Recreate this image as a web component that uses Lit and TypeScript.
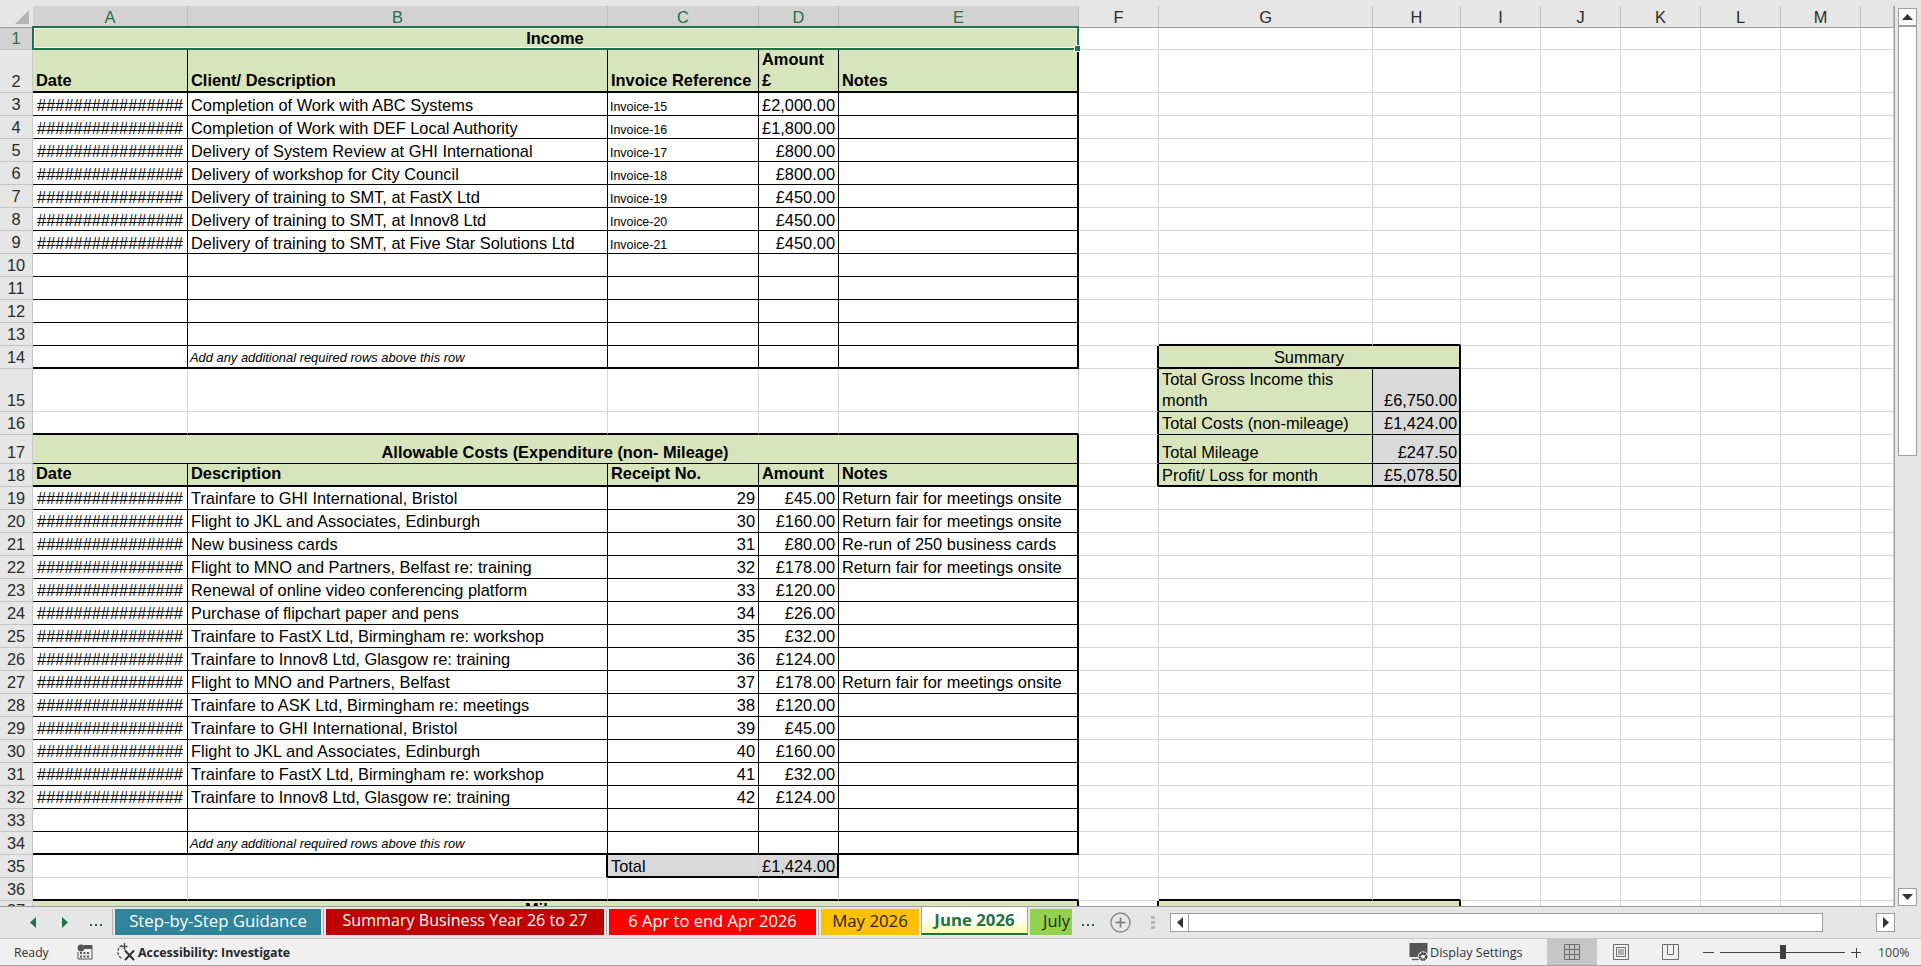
import { LitElement, html, css } from "lit";
import { customElement } from "lit/decorators.js";

const COLS = "ABCDEFGHIJKLMN".split("");
const HASH = "################";
const ROW_H: Record<number, number> = { 1: 22, 2: 43, 15: 43, 17: 29 };

type Cell = { t?: string; c?: string };
const DATA: Record<string, Cell> = {
  A1: { t: "Income", c: "b ctr up" },
  A2: { t: "Date", c: "b wrap" },
  B2: { t: "Client/ Description", c: "b wrap" },
  C2: { t: "Invoice Reference", c: "b wrap" },
  D2: { t: "Amount £", c: "b wrap" },
  E2: { t: "Notes", c: "b wrap" },
  B14: { t: "Add any additional required rows above this row", c: "it" },
  G14: { t: "Summary", c: "ctr" },
  G15: { t: "Total Gross Income this month", c: "wrap" },
  H15: { t: "£6,750.00", c: "rt" },
  G16: { t: "Total Costs (non-mileage)" },
  H16: { t: "£1,424.00", c: "rt" },
  G17: { t: "Total Mileage" },
  H17: { t: "£247.50", c: "rt" },
  G18: { t: "Profit/ Loss for month" },
  H18: { t: "£5,078.50", c: "rt" },
  A17: { t: "Allowable Costs (Expenditure (non- Mileage)", c: "b ctr" },
  A18: { t: "Date", c: "b wrap" },
  B18: { t: "Description", c: "b wrap" },
  C18: { t: "Receipt No.", c: "b wrap" },
  D18: { t: "Amount", c: "b wrap" },
  E18: { t: "Notes", c: "b wrap" },
  B34: { t: "Add any additional required rows above this row", c: "it" },
  C35: { t: "Total" },
  D35: { t: "£1,424.00", c: "rt" },
  A37: { t: "Mileage", c: "b ctr top" },
};

const INCOME: [string, string, string][] = [
  ["Completion of Work with ABC Systems", "Invoice-15", "£2,000.00"],
  ["Completion of Work with DEF Local Authority", "Invoice-16", "£1,800.00"],
  ["Delivery of System Review at GHI International", "Invoice-17", "£800.00"],
  ["Delivery of workshop for City Council", "Invoice-18", "£800.00"],
  ["Delivery of training to SMT, at FastX Ltd", "Invoice-19", "£450.00"],
  ["Delivery of training to SMT, at Innov8 Ltd", "Invoice-20", "£450.00"],
  ["Delivery of training to SMT, at Five Star Solutions Ltd", "Invoice-21", "£450.00"],
];
INCOME.forEach(([d, inv, amt], i) => {
  const r = i + 3;
  DATA["A" + r] = { t: HASH, c: "ctr" };
  DATA["B" + r] = { t: d };
  DATA["C" + r] = { t: inv, c: "sm" };
  DATA["D" + r] = { t: amt, c: "rt" };
});

const FAIR = "Return fair for meetings onsite";
const COSTS: [string, string, string][] = [
  ["Trainfare to GHI International, Bristol", "£45.00", FAIR],
  ["Flight to JKL and Associates, Edinburgh", "£160.00", FAIR],
  ["New business cards", "£80.00", "Re-run of 250 business cards"],
  ["Flight to MNO and Partners, Belfast re: training", "£178.00", FAIR],
  ["Renewal of online video conferencing platform", "£120.00", ""],
  ["Purchase of flipchart paper and pens", "£26.00", ""],
  ["Trainfare to FastX Ltd, Birmingham re: workshop", "£32.00", ""],
  ["Trainfare to Innov8 Ltd, Glasgow re: training", "£124.00", ""],
  ["Flight to MNO and Partners, Belfast", "£178.00", FAIR],
  ["Trainfare to ASK Ltd, Birmingham re: meetings", "£120.00", ""],
  ["Trainfare to GHI International, Bristol", "£45.00", ""],
  ["Flight to JKL and Associates, Edinburgh", "£160.00", ""],
  ["Trainfare to FastX Ltd, Birmingham re: workshop", "£32.00", ""],
  ["Trainfare to Innov8 Ltd, Glasgow re: training", "£124.00", ""],
];
COSTS.forEach(([d, amt, note], i) => {
  const r = i + 19;
  DATA["A" + r] = { t: HASH, c: "ctr" };
  DATA["B" + r] = { t: d };
  DATA["C" + r] = { t: String(29 + i), c: "rt" };
  DATA["D" + r] = { t: amt, c: "rt" };
  DATA["E" + r] = { t: note };
});

const SPANS: Record<string, number> = { A1: 5, A17: 5, A37: 5, G14: 2, G37: 2 };

const within = (r: number, a: number, b: number) => r >= a && r <= b;

function borderClasses(col: string, r: number): string {
  const out: string[] = [];
  const main = "ABCDE".includes(col);
  const side = col === "G" || col === "H";
  if (main) {
    if ([2, 14, 16, 18, 34, 36].includes(r)) out.push("bbt");
    else if (within(r, 3, 13) || within(r, 19, 33) || r === 1 || r === 17) out.push("bb");
  }
  if ((col === "C" || col === "D") && r === 35) out.push("bbt");
  if (side) {
    if ([13, 14, 18, 36].includes(r)) out.push("bbt");
    else if (within(r, 15, 17)) out.push("bb");
  }
  if (col === "E" && (within(r, 1, 14) || within(r, 17, 34) || r === 37)) out.push("brt");
  if ("ABCD".includes(col) && (within(r, 2, 14) || within(r, 18, 34))) out.push("br");
  if ((col === "B" || col === "D") && r === 35) out.push("brt");
  if (col === "F" && (within(r, 14, 18) || r === 37)) out.push("brt");
  if (col === "G" && within(r, 15, 18)) out.push("br");
  if (col === "H" && (within(r, 14, 18) || r === 37)) out.push("brt");
  return out.join(" ");
}

function fillClass(col: string, r: number): string {
  if ("ABCDE".includes(col) && [1, 2, 17, 18, 37].includes(r)) return "green";
  if (col === "G" && (within(r, 14, 18) || r === 37)) return "green";
  if (col === "H" && within(r, 15, 18)) return "gray";
  if ((col === "C" || col === "D") && r === 35) return "gray";
  return "";
}

const TABS = [
  { label: "Step-by-Step Guidance", c: "t1" },
  { label: "Summary Business Year 26 to 27", c: "t2" },
  { label: "6 Apr to end Apr 2026", c: "t3" },
  { label: "May 2026", c: "t4" },
  { label: "June 2026", c: "t5" },
  { label: "July", c: "t6" },
];

@customElement("app-root")
export class AppRoot extends LitElement {
  static styles = css`
    :host {
      display: flex;
      flex-direction: column;
      width: 1921px;
      height: 966px;
      overflow: hidden;
      background: #e6e6e6;
      font-family: "Liberation Sans", Arial, sans-serif;
      color: #000;
    }
    .topstrip { height: 6px; flex: none; background: #e6e6e6; }
    .main { display: flex; height: 900px; flex: none; position: relative; z-index: 1; }
    .sheet-wrap {
      width: 1895px;
      height: 901px;
      flex: none;
      overflow: hidden;
      position: relative;
      border-right: 1px solid #9e9e9e;
      border-bottom: 1px solid #9e9e9e;
      box-sizing: border-box;
      background: #fff;
    }
    .sheet {
      display: grid;
      grid-template-columns: 33px 155px 420px 151px 80px 240px 80px 214px 88px 80px 80px 80px 80px 80px 33px;
      font-size: 16.4px;
      line-height: 18px;
    }
    .corner {
      background: #e6e6e6;
      border-bottom: 1px solid #9e9e9e;
      position: relative;
      box-sizing: border-box;
      height: 22px;
    }
    .corner svg { position: absolute; left: 15px; top: 3px; }
    .ch {
      height: 22px;
      box-sizing: border-box;
      background: #e6e6e6;
      border-bottom: 1px solid #9e9e9e;
      border-right: 1px solid #bdbdbd;
      color: #2b2b2b;
      text-align: center;
      line-height: 20px;
      padding-top: 1px;
    }
    .ch.sel { background: #d2d2d2; color: #217346; border-bottom-color: #217346; }
    .rh {
      box-sizing: border-box;
      background: #e6e6e6;
      border-bottom: 1px solid #c4c4c4;
      border-right: 1px solid #c8c8c8;
      color: #2b2b2b;
      display: flex;
      align-items: flex-end;
      justify-content: center;
      padding-bottom: 2px;
      overflow: hidden;
    }
    .rh.sel { background: #d2d2d2; color: #217346; }
    .rh.clip { align-items: flex-start; padding-bottom: 0; }
    .cell {
      box-sizing: border-box;
      min-width: 0;
      overflow: hidden;
      white-space: nowrap;
      display: flex;
      align-items: flex-end;
      justify-content: flex-start;
      padding: 0 3px 1px;
      border-right: 1px solid #d4d4d4;
      border-bottom: 1px solid #d4d4d4;
    }
    .bb { border-bottom: 1px solid #000; }
    .bbt { border-bottom: 2px solid #000; padding-bottom: 0; }
    .br { border-right: 1px solid #000; }
    .brt { border-right: 2px solid #000; }
    .brt.rt { padding-right: 2px; }
    .green { background: #d8e4bc; }
    .gray { background: #d9d9d9; }
    .b { font-weight: 700; }
    .ctr { justify-content: center; }
    .rt { justify-content: flex-end; }
    .up { padding-bottom: 2px; }
    .up.bbt { padding-bottom: 1px; }
    .sm { font-size: 12.4px; line-height: 16px; padding-bottom: 0; padding-left: 2px; }
    .it { font-style: italic; font-size: 12.9px; line-height: 16px; padding-left: 2px; padding-bottom: 2px; }
    .wrap { line-height: 21px; white-space: normal; padding-bottom: 0; }
    .top { align-items: flex-start; line-height: 18px; }
    .top > span { margin-top: -1px; }
    .selection {
      position: absolute;
      left: 32px;
      top: 20px;
      width: 1047px;
      height: 24px;
      box-sizing: border-box;
      border: 2px solid #217346;
      box-shadow: inset 0 0 0 1px #f4f8ea;
      pointer-events: none;
    }
    .handle {
      position: absolute;
      right: -4px;
      bottom: -4px;
      width: 5px;
      height: 5px;
      background: #217346;
      border: 1px solid #fff;
    }

    .vscroll {
      flex: none;
      width: 26px;
      display: flex;
      flex-direction: column;
      padding: 2px 4px 0 3px;
      box-sizing: border-box;
    }
    .sbtn {
      flex: none;
      background: #fff;
      border: 1px solid #9e9e9e;
      box-sizing: border-box;
      display: flex;
      align-items: center;
      justify-content: center;
    }
    .vscroll .sbtn { height: 18px; width: 19px; }
    .vthumb {
      flex: none;
      height: 430px;
      width: 19px;
      background: #fff;
      border: 1px solid #9e9e9e;
      box-sizing: border-box;
    }
    .vspace { flex: 1; }

    .tabbar {
      height: 32px;
      flex: none;
      display: flex;
      align-items: flex-start;
      background: #e6e6e6;
      box-sizing: border-box;
      position: relative;
    }
    .nav {
      width: 112px;
      flex: none;
      height: 26px;
      margin-top: 3px;
      border-right: 1px solid #b0b0b0;
      display: flex;
      align-items: center;
    }
    .nav .a { margin-left: 30px; display: block; }
    .nav .b2 { margin-left: 26px; display: block; }
    .nav .dots { margin-left: 22px; display: flex; gap: 3px; margin-top: 6px; }
    .dots i { width: 2px; height: 2px; background: #217346; display: block; }
    .tabs { display: flex; margin-left: 2px; align-items: flex-start; }
    .tab {
      flex: none;
      height: 26px;
      margin-top: 3px;
      box-sizing: border-box;
      display: flex;
      align-items: center;
      justify-content: center;
      font-family: "Open Sans", "Noto Sans", sans-serif;
      font-size: 16.5px;
      white-space: nowrap;
      overflow: hidden;
      color: #fff;
      padding-bottom: 4px;
    }
    .sep { flex: none; width: 1px; height: 26px; margin: 3px 2px 0; background: #b0b0b0; }
    .t1 { width: 206px; background: #31859b; font-size: 16.8px; }
    .t2 { width: 278px; background: #c00000; font-size: 16.1px; }
    .t3 { width: 207px; background: #ff0000; }
    .t4 { width: 98px; background: #ffc000; color: #262626; font-size: 16.8px; }
    .t5 {
      width: 107px;
      height: 29px;
      margin-top: 0;
      margin-left: 2px;
      color: #217346;
      font-weight: 700;
      font-size: 16.8px;
      background: linear-gradient(#ffffff 45%, #ffffa6 100%);
      border: 1px solid #a6a6a6;
      border-bottom: 2px solid #217346;
      padding-bottom: 2px;
    }
    .t6 { width: 42px; margin-left: 2px; background: #92d050; color: #262626; justify-content: flex-start; padding-left: 13px; }
    .after { flex: none; display: flex; align-items: center; height: 26px; margin-top: 3px; }
    .after .dots { display: flex; gap: 3px; margin-left: 10px; margin-top: 6px; }
    .after svg.plus { margin-left: 16px; display: block; }
    .grip { display: flex; flex-direction: column; gap: 2px; margin-left: 20px; }
    .grip i { width: 4px; height: 3px; background: #b8b8b8; display: block; }
    .hscroll {
      position: absolute;
      left: 1170px;
      top: 7px;
      width: 725px;
      height: 19px;
      display: flex;
    }
    .hscroll .sbtn { width: 19px; height: 19px; }
    .hthumb { flex: none; width: 634px; height: 19px; background: #fff; border: 1px solid #9e9e9e; border-left-width: 0; box-sizing: border-box; }
    .hspace { flex: 1; }

    .status {
      height: 28px;
      flex: none;
      background: #f0f0f0;
      border-top: 1px solid #c6c6c6;
      border-bottom: 1px solid #9e9e9e;
      box-sizing: border-box;
      display: flex;
      align-items: stretch;
      font-family: "Open Sans", "Noto Sans", sans-serif;
      font-size: 12.2px;
      color: #333;
    }
    .status > * { flex: none; display: flex; align-items: center; }
    .ready { margin-left: 14px; width: 63px; }
    .calc { width: 38px; }
    .acc { width: 1294px; font-weight: 700; color: #262626; font-size: 12.4px; gap: 1px; }
    .disp { width: 138px; gap: 1px; font-size: 12.6px; }
    .view { width: 49.5px; justify-content: center; }
    .view.on { background: #c6c6c6; }
    .zoomc { margin-left: 7.5px; width: 165px; position: relative; }
    .zoomc i { position: absolute; background: #404040; display: block; }
    .zoomc .m { left: 0; width: 11px; height: 1px; top: 13px; }
    .zoomc .line { left: 17px; width: 125px; height: 1px; top: 13px; }
    .zoomc .k { left: 77px; width: 6px; height: 14px; top: 6px; }
    .zoomc .p1 { left: 148px; width: 10px; height: 1px; top: 13px; }
    .zoomc .p2 { left: 152.5px; width: 1px; height: 10px; top: 8.5px; }
    .pct { margin-left: 10px; font-size: 12.4px; color: #444; }
  `;

  private renderCells() {
    const out: unknown[] = [];
    for (let r = 1; r <= 37; r++) {
      const hdrCls = `rh ${r === 1 ? "sel" : ""} ${r === 37 ? "clip" : ""}`;
      out.push(html`<div class=${hdrCls}><span>${r}</span></div>`);
      for (let i = 0; i < COLS.length; i++) {
        const col = COLS[i];
        const key = col + r;
        const d = DATA[key] ?? {};
        const span = SPANS[key] ?? 1;
        const last = COLS[i + span - 1];
        const cls = ["cell", d.c ?? "", r >= 14 ? "up" : "", borderClasses(last, r), fillClass(col, r)].join(" ");
        const style = span > 1 ? `grid-column: span ${span}` : "";
        const content = d.t ? html`<span>${d.t}</span>` : "";
        out.push(html`<div class=${cls} style=${style}>${content}</div>`);
        i += span - 1;
      }
    }
    return out;
  }

  private rowTemplate() {
    const a = ["22px"];
    for (let r = 1; r <= 37; r++) a.push((ROW_H[r] ?? 23) + "px");
    return a.join(" ");
  }

  render() {
    return html`
      <div class="topstrip"></div>
      <div class="main">
        <div class="sheet-wrap">
          <div class="sheet" style="grid-template-rows:${this.rowTemplate()}">
            <div class="corner">
              <svg width="15" height="15" viewBox="0 0 15 15"><path d="M14 1V15H0Z" fill="#b4b4b4" /></svg>
            </div>
            ${COLS.map((c, i) => html`<div class="ch ${i < 5 ? "sel" : ""}">${c === "N" ? "" : c}</div>`)}
            ${this.renderCells()}
          </div>
          <div class="selection"><div class="handle"></div></div>
        </div>
        <div class="vscroll">
          <div class="sbtn">
            <svg width="11" height="6" viewBox="0 0 11 6"><path d="M5.5 0 11 6H0Z" fill="#333" /></svg>
          </div>
          <div class="vthumb"></div>
          <div class="vspace"></div>
          <div class="sbtn">
            <svg width="11" height="6" viewBox="0 0 11 6"><path d="M0 0H11L5.5 6Z" fill="#333" /></svg>
          </div>
        </div>
      </div>
      <div class="tabbar">
        <div class="nav">
          <svg class="a" width="6" height="11" viewBox="0 0 6 11"><path d="M6 0V11L0 5.5Z" fill="#217346" /></svg>
          <svg class="b2" width="6" height="11" viewBox="0 0 6 11"><path d="M0 0V11L6 5.5Z" fill="#217346" /></svg>
          <div class="dots"><i></i><i></i><i></i></div>
        </div>
        <div class="tabs">
          ${TABS.map((t, i) => html`
            ${i > 0 && i < 4 ? html`<div class="sep"></div>` : ""}
            <div class="tab ${t.c}">${t.label}</div>
          `)}
        </div>
        <div class="after">
          <div class="dots"><i></i><i></i><i></i></div>
          <svg class="plus" width="21" height="21" viewBox="0 0 21 21">
            <circle cx="10.5" cy="10.5" r="9.5" fill="none" stroke="#8a8a8a" stroke-width="1.4" />
            <path d="M10.5 5.5V15.5M5.5 10.5H15.5" stroke="#7a7a7a" stroke-width="1.6" />
          </svg>
          <div class="grip"><i></i><i></i><i></i></div>
        </div>
        <div class="hscroll">
          <div class="sbtn">
            <svg width="6" height="11" viewBox="0 0 6 11"><path d="M6 0V11L0 5.5Z" fill="#333" /></svg>
          </div>
          <div class="hthumb"></div>
          <div class="hspace"></div>
          <div class="sbtn">
            <svg width="6" height="11" viewBox="0 0 6 11"><path d="M0 0V11L6 5.5Z" fill="#333" /></svg>
          </div>
        </div>
      </div>
      <div class="status">
        <div class="ready">Ready</div>
        <div class="calc">
          <svg width="16" height="16" viewBox="0 0 16 16">
            <circle cx="4" cy="4" r="3.4" fill="#555" />
            <path d="M7 1.5H15V15H1V8" fill="none" stroke="#555" stroke-width="1" />
            <path d="M7 1H15V5H7Z" fill="#555" />
            <path d="M3 8H5V10H3ZM6.5 8H8.5V10H6.5ZM10 8H12V10H10ZM3 11.5H5V13.5H3ZM6.5 11.5H8.5V13.5H6.5ZM10 11.5H12V13.5H10Z" fill="#555" />
          </svg>
        </div>
        <div class="acc">
          <svg width="22" height="20" viewBox="0 0 22 20">
            <path d="M7 3.2A7.5 7.5 0 0 0 7 16.6" fill="none" stroke="#444" stroke-width="1.2" stroke-dasharray="3 1.2" />
            <path d="M9.5 1V8M6.5 4.5H12.5" stroke="#444" stroke-width="1.3" />
            <path d="M10 8.5L19 18M19 8.5L10 18" stroke="#333" stroke-width="2" />
          </svg>
          <span>Accessibility: Investigate</span>
        </div>
        <div class="disp">
          <svg width="20" height="20" viewBox="0 0 20 20">
            <path d="M0.5 1H18.5V13H10V15H0.5Z" fill="#555" />
            <path d="M3 17.5H10" stroke="#555" stroke-width="1.4" />
            <circle cx="14" cy="14.5" r="4.2" fill="none" stroke="#f0f0f0" stroke-width="2" />
            <circle cx="14" cy="14.5" r="3.2" fill="none" stroke="#444" stroke-width="2.4" stroke-dasharray="2 0.6" />
            <circle cx="14" cy="14.5" r="1.2" fill="#f0f0f0" />
          </svg>
          <span>Display Settings</span>
        </div>
        <div class="view on">
          <svg width="16" height="16" viewBox="0 0 16 16">
            <path d="M0.5 0.5H15.5V15.5H0.5ZM5.5 0.5V15.5M10.5 0.5V15.5M0.5 5.5H15.5M0.5 10.5H15.5" fill="none" stroke="#6e6e6e" />
          </svg>
        </div>
        <div class="view">
          <svg width="16" height="16" viewBox="0 0 16 16">
            <path d="M0.5 0.5H15.5V15.5H0.5ZM3.5 3.5H12.5V12.5H3.5ZM5 6H11M5 8H11M5 10H11" fill="none" stroke="#6e6e6e" />
          </svg>
        </div>
        <div class="view">
          <svg width="17" height="16" viewBox="0 0 17 16">
            <path d="M0.5 0.5H16.5V15.5H0.5ZM5.5 0.5V10.5H11.5V0.5" fill="none" stroke="#6e6e6e" />
          </svg>
        </div>
        <div class="zoomc">
          <i class="m"></i><i class="line"></i><i class="k"></i><i class="p1"></i><i class="p2"></i>
        </div>
        <div class="pct">100%</div>
      </div>
    `;
  }
}
